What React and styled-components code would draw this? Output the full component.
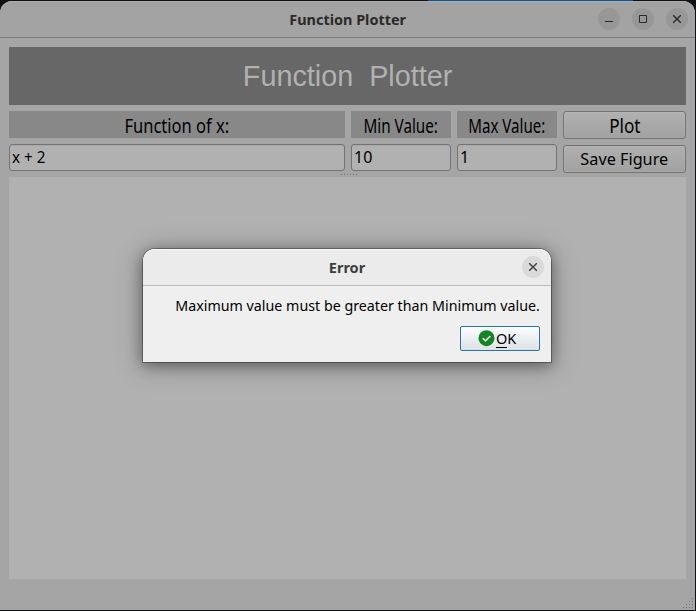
import React from "react";
import styled, { createGlobalStyle } from "styled-components";

const GlobalStyle = createGlobalStyle`
  * { box-sizing: border-box; }
  body { margin: 0; background: #101113; overflow: hidden; }
`;

const Desktop = styled.div`
  position: relative;
  width: 696px;
  height: 611px;
  padding: 1px 1px 1px 0;
  background: linear-gradient(90deg, #101113 428px, #07579b 428px, #07579b 633px, #101113 633px);
  background-size: 100% 1px;
  background-repeat: no-repeat;
  font-family: "Noto Sans", sans-serif;
  color: #000;
`;

const Window = styled.main`
  width: 695px;
  height: 609px;
  display: flex;
  flex-direction: column;
  background: #a5a5a5;
  border-radius: 12px 12px 0 0;
  overflow: hidden;
`;

const TitleBar = styled.header`
  position: relative;
  flex: none;
  height: ${(p) => p.$height}px;
  display: flex;
  align-items: center;
  justify-content: center;
  background: ${(p) => p.$bg};
  border-bottom: 1px solid ${(p) => p.$line};
  box-shadow: inset 0 1px ${(p) => p.$shine};
  color: ${(p) => p.$color};
`;

const Label = styled.span`
  display: inline-block;
  flex: none;
  white-space: pre;
  line-height: 1;
  font-size: ${(p) => p.$size}px;
  font-weight: ${(p) => p.$weight || 400};
  transform: translateY(${(p) => p.$dy || 0}px) scaleX(${(p) => p.$fit || 1});
  transform-origin: ${(p) => p.$origin || "center"};
`;

const WindowControls = styled.div`
  position: absolute;
  right: ${(p) => p.$right}px;
  top: 7px;
  display: flex;
  gap: 12px;
`;

const ControlButton = styled.button`
  width: 22px;
  height: 22px;
  padding: 0;
  border: 0;
  border-radius: 50%;
  background: ${(p) => p.$bg};
  color: ${(p) => p.$color};
  svg { display: block; }
`;

const Content = styled.section`
  flex: 1;
  display: flex;
  flex-direction: column;
  padding: 9px 9px 0;
`;

const Banner = styled.h1`
  flex: none;
  height: 58px;
  margin: 0 0 6px;
  display: flex;
  align-items: center;
  justify-content: center;
  background: #676767;
  color: #b1b1b1;
  font-family: "Liberation Sans", sans-serif;
`;

const Controls = styled.div`
  display: grid;
  grid-template-columns: 336px 100px 100px 123px;
  gap: 6px;
  height: 62px;
`;

const Column = styled.div`
  display: flex;
  flex-direction: column;
  gap: 6px;
`;

const FieldName = styled.div`
  height: 27px;
  display: flex;
  align-items: center;
  justify-content: center;
  background: #888;
`;

const Field = styled.div`
  height: 27px;
  display: flex;
  align-items: center;
  padding-left: 2px;
  background: #b1b1b1;
  border: 1px solid #737373;
  border-radius: 3px;
  box-shadow: inset 0 1px #a8a8a8;
`;

const Button = styled.button`
  height: 28px;
  padding: 0;
  display: flex;
  align-items: center;
  justify-content: center;
  border: 1px solid #737373;
  border-radius: 3px;
  background: linear-gradient(#b0b0b0, #a1a1a1);
  box-shadow: inset 0 0 0 1px #ffffff12;
  font-family: inherit;
  color: #000;
`;

const Splitter = styled.div`
  flex: none;
  height: 4px;
  padding-top: 1px;
  display: flex;
  justify-content: center;
  svg { display: block; margin-left: 3px; }
`;

const PlotArea = styled.div`
  flex: none;
  height: 402px;
  background: #b1b1b1;
`;

const StatusBar = styled.footer`
  height: 31px;
  flex: none;
  display: flex;
  justify-content: flex-end;
  align-items: flex-end;
  padding: 0 2px 2px 0;
`;

const Dialog = styled.section`
  position: absolute;
  left: 143px;
  top: 249px;
  width: 408px;
  height: 113px;
  display: flex;
  flex-direction: column;
  background: #efefef;
  border-radius: 12px 12px 0 0;
  box-shadow: 0 0 0 1px #00000050, 0 3px 14px 1px #00000058, 0 3px 28px 2px #00000038;
  > header { border-radius: 12px 12px 0 0; }
`;

const DialogBody = styled.div`
  flex: 1;
  display: flex;
  flex-direction: column;
  align-items: flex-end;
  justify-content: space-between;
  padding: 12px 11px 11px;
`;

const OkButton = styled(Button)`
  width: 80px;
  height: 25px;
  justify-content: flex-start;
  padding-left: 16.5px;
  gap: 1.5px;
  border-color: #2d749c;
  border-radius: 2px;
  background: linear-gradient(#fcfdfe, #dce2e7);
  box-shadow: none;
`;

const Mnemonic = styled.span`
  display: inline-block;
  height: 17px;
  border-bottom: 1px solid #000;
`;

const CloseIcon = () => (
  <svg width="22" height="22" fill="none" stroke="currentColor" strokeWidth="1.4">
    <path d="M7.2 7.2l7.6 7.6M14.8 7.2l-7.6 7.6" />
  </svg>
);

const gripDots = [[9, 0], [6, 3], [9, 3], [3, 6], [6, 6], [9, 6], [0, 9], [3, 9], [6, 9], [9, 9]];

export default function App() {
  return (
    <Desktop>
      <GlobalStyle />
      <Window>
        <TitleBar $height={37} $bg="#a3a3a3" $line="#7d7d7d" $shine="#acacac" $color="#2a2a2a">
          <Label $size={14.5} $weight={700} $fit={0.995}>Function Plotter</Label>
          <WindowControls $right={7}>
            <ControlButton $bg="#979797" $color="#292929" aria-label="Minimize">
              <svg width="22" height="22"><path d="M7 13h8v1H7z" fill="currentColor" /></svg>
            </ControlButton>
            <ControlButton $bg="#979797" $color="#292929" aria-label="Maximize">
              <svg width="22" height="22"><path d="M7.5 7.5h7v7h-7z" fill="none" stroke="currentColor" /></svg>
            </ControlButton>
            <ControlButton $bg="#979797" $color="#292929" aria-label="Close"><CloseIcon /></ControlButton>
          </WindowControls>
        </TitleBar>
        <Content>
          <Banner><Label $size={29} $fit={0.992}>{"Function  Plotter"}</Label></Banner>
          <Controls>
            <Column>
              <FieldName><Label $size={19.5} $fit={0.848} $dy={1}>Function of x:</Label></FieldName>
              <Field><Label $size={16} $fit={0.95} $dy={-1} $origin="left">x + 2</Label></Field>
            </Column>
            <Column>
              <FieldName><Label $size={19.5} $fit={0.78} $dy={1}>Min Value:</Label></FieldName>
              <Field><Label $size={16} $dy={-1} $origin="left">10</Label></Field>
            </Column>
            <Column>
              <FieldName><Label $size={19.5} $fit={0.775} $dy={1}>Max Value:</Label></FieldName>
              <Field><Label $size={16} $dy={-1} $origin="left">1</Label></Field>
            </Column>
            <Column>
              <Button><Label $size={19.5} $fit={0.88} $dy={1}>Plot</Label></Button>
              <Button><Label $size={16} $fit={1.015}>Save Figure</Label></Button>
            </Column>
          </Controls>
          <Splitter>
            <svg width="17" height="1" fill="#777">
              {[0, 3, 6, 9, 12, 15].map((x) => <rect key={x} x={x} width="1" height="1" />)}
            </svg>
          </Splitter>
          <PlotArea />
        </Content>
        <StatusBar>
          <svg width="10" height="10" fill="#747474">
            {gripDots.map(([x, y]) => <rect key={`${x}-${y}`} x={x} y={y} width="1" height="1" />)}
          </svg>
        </StatusBar>
      </Window>
      <Dialog role="dialog">
        <TitleBar $height={37} $bg="#ebebeb" $line="#bbb" $shine="#f9f9f9" $color="#3d3d3d">
          <Label $size={14.5} $weight={700}>Error</Label>
          <WindowControls $right={7}>
            <ControlButton $bg="#dadada" $color="#3d3d3d" aria-label="Close"><CloseIcon /></ControlButton>
          </WindowControls>
        </TitleBar>
        <DialogBody>
          <Label $size={14.5} $fit={0.983} $origin="right">Maximum value must be greater than Minimum value.</Label>
          <OkButton>
            <svg width="17" height="17" fill="none">
              <circle cx="8.5" cy="8.2" r="8" fill="#148523" />
              <path d="M4.8 8.2l2.7 2.6 4.8-4.9" stroke="#fff" strokeWidth="1.5" />
            </svg>
            <Label $size={14.5} $origin="left" $dy={1}><Mnemonic>O</Mnemonic>K</Label>
          </OkButton>
        </DialogBody>
      </Dialog>
    </Desktop>
  );
}
